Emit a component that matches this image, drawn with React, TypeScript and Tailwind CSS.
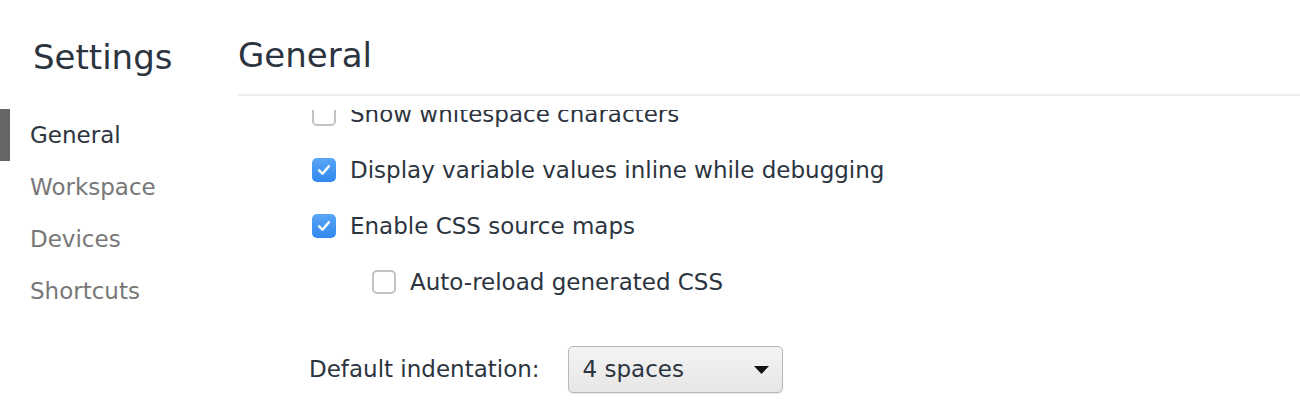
import { useState } from "react";

const FONT = "font-['DejaVu_Sans','Liberation_Sans',sans-serif]";

const NAV = ["General", "Workspace", "Devices", "Shortcuts"];

type Item = { label: string; checked: boolean; indent?: boolean };

const ITEMS: Item[] = [
  { label: "Show whitespace characters", checked: false },
  { label: "Display variable values inline while debugging", checked: true },
  { label: "Enable CSS source maps", checked: true },
  { label: "Auto-reload generated CSS", checked: false, indent: true },
];

function Checkbox({ checked, onToggle }: { checked: boolean; onToggle: () => void }) {
  return (
    <button
      type="button"
      onClick={onToggle}
      className={
        checked
          ? "flex size-[24px] shrink-0 items-center justify-center rounded-[5px] bg-gradient-to-b from-[#5aa6f6] to-[#2f87ee]"
          : "flex size-[24px] shrink-0 items-center justify-center rounded-[5px] border-2 border-[#c2c2c2] bg-white"
      }
    >
      {checked ? (
        <svg viewBox="0 0 24 24" className="size-[18px]" fill="none">
          <path d="M5.5 12.5l4.5 4.5L18.5 7" stroke="white" strokeWidth="3.2" strokeLinecap="round" strokeLinejoin="round" />
        </svg>
      ) : null}
    </button>
  );
}

export default function App() {
  const [items, setItems] = useState(ITEMS);
  const active = "General";

  return (
    <div className={`flex h-[414px] w-[1300px] overflow-hidden bg-white text-[#2c3440] ${FONT}`}>
      {/* sidebar */}
      <div className="flex w-[238px] shrink-0 flex-col">
        <h1 className="pl-[33px] pt-[35px] text-[34px] leading-[44px]">Settings</h1>
        <nav className="mt-[30px] flex flex-col">
          {NAV.map((name) => (
            <div
              key={name}
              className={
                name === active
                  ? "flex h-[52px] items-center border-l-[10px] border-[#666666] pl-[20px] text-[23px] text-[#2c3440]"
                  : "flex h-[52px] items-center pl-[30px] text-[23px] text-[#777777]"
              }
            >
              {name}
            </div>
          ))}
        </nav>
      </div>

      {/* main */}
      <div className="flex min-w-0 flex-1 flex-col">
        <div className="border-b-2 border-[#eeeeee] pt-[33px] pb-[17px]">
          <h2 className="text-[34px] leading-[44px]">General</h2>
        </div>
        <div className="mt-[14px] min-h-0 flex-1 overflow-hidden">
          <div className="-mt-[24px] flex flex-col pl-[74px]">
            {items.map((item, i) => (
              <div
                key={item.label}
                className={
                  item.indent
                    ? "flex h-[56px] items-center gap-[14px] pl-[60px] text-[23px]"
                    : "flex h-[56px] items-center gap-[14px] text-[23px]"
                }
              >
                <Checkbox
                  checked={item.checked}
                  onToggle={() =>
                    setItems((prev) =>
                      prev.map((p, j) => (j === i ? { ...p, checked: !p.checked } : p)),
                    )
                  }
                />
                <span>{item.label}</span>
              </div>
            ))}
            <div className="mt-[36px] flex items-center gap-[28px] text-[23px]">
              <span className="-ml-[3px]">Default indentation:</span>
              <div className="flex h-[47px] w-[215px] items-center justify-between rounded-[5px] border border-[#b8b8b8] bg-gradient-to-b from-[#f4f4f4] to-[#e6e6e6] pl-[14px] pr-[13px] shadow-[0_1px_1px_rgba(0,0,0,0.1)]">
                <span>4 spaces</span>
                <svg viewBox="0 0 15 8" className="h-[8px] w-[15px]">
                  <path d="M0 0h15L7.5 8z" fill="#111" />
                </svg>
              </div>
            </div>
          </div>
        </div>
      </div>
    </div>
  );
}
